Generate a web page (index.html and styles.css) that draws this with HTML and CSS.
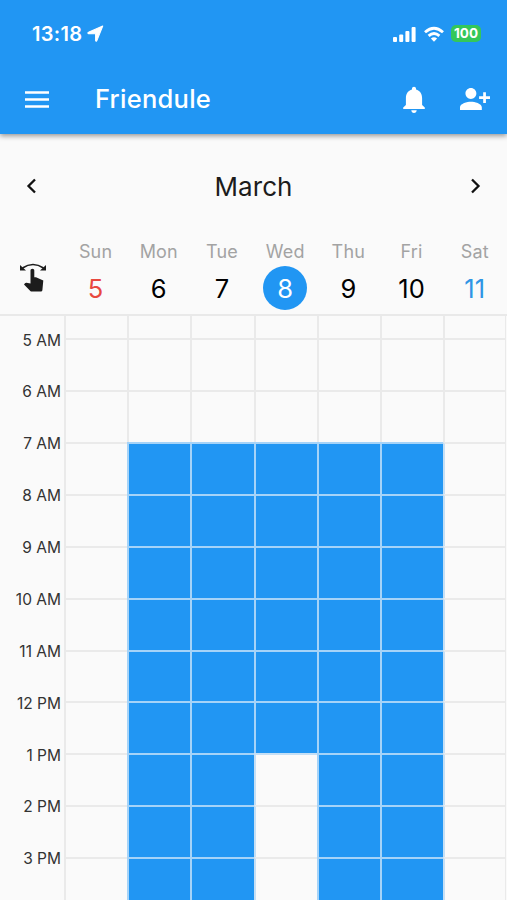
FILE: index.html
```html
<!DOCTYPE html>
<html lang="en">
<head>
<meta charset="utf-8">
<title>Friendule</title>
<link rel="stylesheet" href="styles.css">
</head>
<body>
<header class="top">
  <div class="status">
    <span class="clock">13:18</span>
    <svg class="location" viewBox="0 0 16 16"><path d="M14.800 1 9.300 14.700c-.3.800-1.200.6-1.200-.2V8.200L1.600 8.100C.7 8.100.6 7.200 1.400 6.900Z"/></svg>
    <svg class="signal" viewBox="0 0 23 16"><rect x="0" y="11" width="4" height="5" rx="1"/><rect x="6.200" y="8.500" width="4" height="7.500" rx="1"/><rect x="12.400" y="5" width="4" height="11" rx="1"/><rect x="18.600" y="1" width="4" height="15" rx="1"/></svg>
    <svg class="wifi" viewBox="0 0 22 16"><path d="M2 6.300Q11-1.700 20 6.300M5.600 9.900Q11 5.100 16.400 9.900"/><path class="dot" d="M7.900 12.500Q11 9.900 14.100 12.500L11 15.700Z"/></svg>
    <span class="battery">100</span>
  </div>
  <div class="appbar">
    <svg class="menu" viewBox="0 0 24 17"><path d="M0 1.500h24M0 8.500h24M0 15.500h24"/></svg>
    <h1>Friendule</h1>
    <svg class="bell" viewBox="4 2 16 20"><path d="M12 22c1.100 0 2-.9 2-2h-4c0 1.100.9 2 2 2zm6-6v-5c0-3.070-1.640-5.640-4.500-6.320V4c0-.83-.67-1.500-1.500-1.500s-1.500.67-1.500 1.500v.68C7.630 5.360 6 7.920 6 11v5l-2 2v1h16v-1l-2-2z"/></svg>
    <svg class="add" viewBox="1 4 22 16"><path d="M9 12c2.210 0 4-1.790 4-4s-1.790-4-4-4-4 1.790-4 4 1.790 4 4 4zm0 2c-2.670 0-8 1.340-8 4v2h16v-2c0-2.660-5.330-4-8-4zm11-4V7h-2v3h-3v2h3v3h2v-3h3v-2z"/></svg>
  </div>
</header>
<nav class="month">
  <svg class="chev" viewBox="0 0 10 16"><path d="M8.500 1.500 2 8l6.500 6.500"/></svg>
  <h2>March</h2>
  <svg class="chev" viewBox="0 0 10 16"><path d="M1.500 1.500 8 8l-6.500 6.500"/></svg>
</nav>
<section class="days">
  <div class="gesture"><svg viewBox="0 0 28 30"><path class="arc" d="M3.500 6Q14-1 24.500 6"/><path d="M1 3v5.500h6zM27 3v5.500h-6zM11.500 8.500c0-1.100.8-1.800 1.900-1.800s1.900.7 1.900 1.800v6.700h1.700l7.300 3.300-.9 9.500c-.1 1-.9 1.600-1.900 1.600h-8.700c-.6 0-1.100-.2-1.500-.6L5 22.500l1-1.300c.4-.4.9-.6 1.500-.5l4 .7Z"/></svg></div>
  <div class="day sun"><span>Sun</span><b>5</b></div>
  <div class="day"><span>Mon</span><b>6</b></div>
  <div class="day"><span>Tue</span><b>7</b></div>
  <div class="day today"><span>Wed</span><b>8</b></div>
  <div class="day"><span>Thu</span><b>9</b></div>
  <div class="day"><span>Fri</span><b>10</b></div>
  <div class="day sat"><span>Sat</span><b>11</b></div>
</section>
<main class="schedule">
  <div class="hours">
    <span>5 AM</span><span>6 AM</span><span>7 AM</span><span>8 AM</span><span>9 AM</span><span>10 AM</span><span>11 AM</span><span>12 PM</span><span>1 PM</span><span>2 PM</span><span>3 PM</span>
  </div>
  <div class="grid">
    <i></i><i></i><i></i><i></i><i></i><i></i><i></i>
    <i></i><i></i><i></i><i></i><i></i><i></i><i></i>
    <i></i><i></i><i></i><i></i><i></i><i></i><i></i>
    <i></i><i class="on"></i><i class="on"></i><i class="on"></i><i class="on"></i><i class="on"></i><i class="after"></i>
    <i></i><i class="on"></i><i class="on"></i><i class="on"></i><i class="on"></i><i class="on"></i><i class="after"></i>
    <i></i><i class="on"></i><i class="on"></i><i class="on"></i><i class="on"></i><i class="on"></i><i class="after"></i>
    <i></i><i class="on"></i><i class="on"></i><i class="on"></i><i class="on"></i><i class="on"></i><i class="after"></i>
    <i></i><i class="on"></i><i class="on"></i><i class="on"></i><i class="on"></i><i class="on"></i><i class="after"></i>
    <i></i><i class="on"></i><i class="on"></i><i class="on"></i><i class="on"></i><i class="on"></i><i class="after"></i>
    <i></i><i class="on"></i><i class="on"></i><i class="after below"></i><i class="on"></i><i class="on"></i><i class="after"></i>
    <i></i><i class="on"></i><i class="on"></i><i class="after"></i><i class="on"></i><i class="on"></i><i class="after"></i>
    <i></i><i class="on"></i><i class="on"></i><i class="after"></i><i class="on"></i><i class="on"></i><i class="after"></i>
  </div>
</main>
</body>
</html>
```
FILE: styles.css
```css
* { box-sizing: border-box; }
body {
  margin: 0;
  height: 900px;
  overflow: hidden;
  display: flex;
  flex-direction: column;
  background: #fafafa;
  color: #1c1c1c;
  font-family: Inter, sans-serif;
}
svg { display: block; flex: none; fill: currentColor; }
h1, h2 { margin: 0; font-weight: 500; }

.top {
  height: 134px;
  flex: none;
  background: #2196f3;
  color: #fff;
  box-shadow: 0 2px 5px rgba(0, 0, 0, .4);
}
.status { display: flex; align-items: center; height: 67px; padding: 0 26px 0 32px; }
.clock { width: 50px; font-size: 20px; font-weight: 600; letter-spacing: .3px; }
.location { width: 17px; height: 17px; margin-left: 5px; stroke: #fff; stroke-width: 1; stroke-linejoin: round; }
.signal { width: 23px; height: 16px; margin-left: auto; }
.wifi { width: 22px; height: 16px; margin-left: 7px; fill: none; stroke: #fff; stroke-width: 2.8; }
.wifi .dot { fill: #fff; stroke: none; }
.battery {
  width: 30px;
  height: 17px;
  margin-left: 6px;
  border-radius: 5px;
  background: #34c759;
  font-size: 13.500px;
  font-weight: 700;
  line-height: 17px;
  text-align: center;
}
.appbar { display: flex; align-items: center; height: 64px; padding: 0 17px 0 25px; }
.menu { width: 24px; height: 17px; stroke: #fff; stroke-width: 2.700; }
h1 { margin-left: 46px; font-size: 25.500px; line-height: 32px; letter-spacing: .25px; }
.bell { width: 22px; height: 27px; margin-left: auto; }
.add { width: 30px; height: 22px; margin-left: 35px; }

.month {
  display: flex;
  align-items: center;
  justify-content: space-between;
  height: 104px;
  flex: none;
  padding: 0 26px;
}
.month h2 { font-size: 26px; font-weight: 400; letter-spacing: .1px; }
.chev { width: 11px; height: 16px; fill: none; stroke: #111; stroke-width: 2.300; }

.days {
  display: grid;
  grid-template-columns: 64px repeat(7, 63.200px);
  height: 78px;
  flex: none;
  border-bottom: 2px solid #e9e9e9;
}
.gesture { padding: 24px 0 0 19px; }
.gesture svg { width: 28px; height: 30px; }
.gesture .arc { fill: none; stroke: currentColor; stroke-width: 1.700; }
.day { display: flex; flex-direction: column; align-items: center; }
.day span { height: 28px; color: #a3a3a3; font-size: 18px; line-height: 27px; letter-spacing: .2px; }
.day b { width: 44px; height: 44px; border-radius: 50%; color: #000; font-size: 25.500px; font-weight: 400; line-height: 45px; text-align: center; }
.sun b { color: #e8483f; }
.sat b { color: #2f95e5; }
.today b { background: #2196f3; color: #fff; }

.schedule { display: flex; flex: 1; min-height: 0; overflow: hidden; }
.hours { width: 64px; flex: none; margin-top: -1.500px; padding-right: 3px; }
.hours span { display: block; height: 51.880px; font-size: 15.500px; line-height: 51.880px; text-align: right; white-space: nowrap; color: #333; }
.grid {
  display: grid;
  flex: none;
  grid-template-columns: repeat(6, 63.200px) 63px;
  grid-template-rows: 22.300px repeat(11, 51.880px);
}
.grid i { border-top: 2px solid #eaeaea; border-left: 2px solid #eaeaea; }
.grid i:nth-child(-n+7) { border-top: 0; }
.grid i:nth-child(7n) { border-right: 1px solid #eaeaea; }
.grid .on { background: #2196f3; border-color: #a5d3f8; }
.grid .after { border-left-color: #c5dff5; }
.grid .below { border-top-color: #c5dff5; }
```
